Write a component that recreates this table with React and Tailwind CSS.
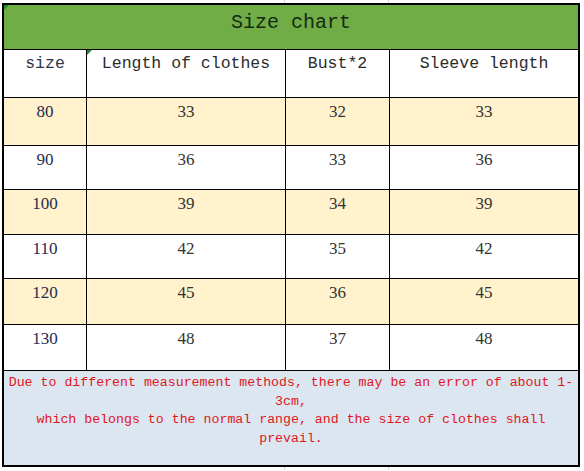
const rows = [
  ['80', '33', '32', '33'],
  ['90', '36', '33', '36'],
  ['100', '39', '34', '39'],
  ['110', '42', '35', '42'],
  ['120', '45', '36', '45'],
  ['130', '48', '37', '48'],
];

const heights = ['h-[47px]', 'h-[43px]', 'h-[44px]', 'h-[43px]', 'h-[45px]', 'h-[45px]'];

const mono = "font-['Liberation_Mono',monospace]";
const serif = "font-['Liberation_Serif',serif]";

function Marker() {
  return (
    <span className="absolute left-0 top-0 w-0 h-0 border-t-[5px] border-r-[5px] border-t-[#1f8a2a] border-r-transparent" />
  );
}

function Strip() {
  return (
    <div className="flex h-[3px] ml-[2px] w-[578px]">
      <div className="w-[283px] border-r border-[#d6d6d6]" />
      <div className="w-[104px] border-r border-[#d6d6d6]" />
    </div>
  );
}

export default function App() {
  return (
    <div className="w-[584px] h-[471px] bg-white overflow-hidden">
      <Strip />
      <div className="ml-[2px] w-[578px] border-2 border-black bg-black grid grid-cols-[82px_198px_103px_188px] gap-px">
        <div className={`relative col-span-4 h-[44px] bg-[#70ad47] text-center pt-[4px] text-[20px] leading-7 text-[#152a10] ${mono}`}>
          <Marker />
          Size chart
        </div>

        <div className={`h-[47px] bg-white text-center pt-[4px] text-[16.5px] leading-5 text-[#2c3448] ${mono}`}>size</div>
        <div className={`relative h-[47px] bg-white text-center pt-[4px] text-[16.5px] leading-5 text-[#2b2b2b] ${mono}`}>
          <Marker />
          Length of clothes
        </div>
        <div className={`h-[47px] bg-white text-center pt-[4px] text-[16.5px] leading-5 text-[#2b2b2b] ${mono}`}>Bust*2</div>
        <div className={`h-[47px] bg-white text-center pt-[4px] text-[16.5px] leading-5 text-[#2b2b2b] ${mono}`}>Sleeve length</div>

        {rows.map((r, i) => {
          const bg = i % 2 === 0 ? 'bg-[#fff2cc]' : 'bg-white';
          return r.map((v, j) => (
            <div
              key={`${i}-${j}`}
              className={`${heights[i]} ${bg} text-center pt-[4px] text-[17px] leading-5 ${serif} ${
                j === 0 ? 'text-[#1f2b4f]' : 'text-[#333333]'
              }`}
            >
              {v}
            </div>
          ));
        })}

        <div className={`col-span-4 h-[94px] bg-[#dce6f1] text-center pt-[3px] text-[13.25px] leading-[18.7px] text-[#e0161b] whitespace-nowrap ${mono}`}>
          Due to different measurement methods, there may be an error of about 1-
          <br />
          3cm,
          <br />
          which belongs to the normal range, and the size of clothes shall
          <br />
          prevail.
        </div>
      </div>
      <Strip />
    </div>
  );
}
